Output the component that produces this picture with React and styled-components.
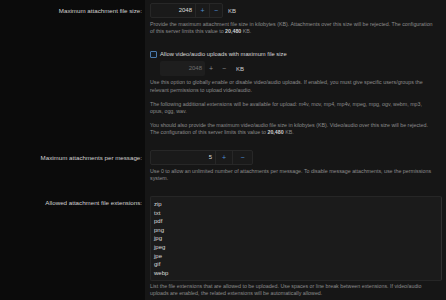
import React from 'react';
import styled, { createGlobalStyle } from 'styled-components';

const Global = createGlobalStyle`
  html, body { margin: 0; padding: 0; background: #0b0b0b; }
  body { font-family: "Liberation Sans", Arial, sans-serif; }
`;

const Form = styled.div`
  width: 446px;
  height: 300px;
  overflow: hidden;
  background: #0b0b0b;
`;

const Row = styled.dl`
  display: grid;
  grid-template-columns: 145px 1fr;
  margin: 0;
`;

const Label = styled.dt`
  margin: 0;
  padding: ${p => p.$top}px 3px 0 0;
  text-align: right;
  color: #d2d2d2;
  font-size: 6.2px;
  line-height: 8px;
`;

const Content = styled.dd`
  margin: 0;
  background: #161616;
  padding: ${p => p.$top}px 4px ${p => p.$bottom}px 5px;
  min-width: 0;
`;

const Inline = styled.div`
  display: flex;
  align-items: center;
  gap: 5px;
  margin: ${p => p.$mt || 0}px 0 0 ${p => p.$ml || 0}px;
`;

const NumberBox = styled.div`
  display: flex;
  height: 15px;
  box-sizing: border-box;
  border: ${p => (p.$disabled ? 'none' : '1px solid #272727')};
  border-radius: 2px;
  background: ${p => (p.$disabled ? 'transparent' : '#1a1a1a')};
`;

const NumValue = styled.div`
  width: ${p => p.$w}px;
  box-sizing: border-box;
  padding-right: 3px;
  text-align: right;
  font-size: 6px;
  line-height: 13px;
  color: ${p => (p.$disabled ? '#6f6f6f' : '#dcdcdc')};
  background: ${p => (p.$disabled ? '#1e1e1e' : 'transparent')};
  border-radius: 2px;
  ${p => (p.$disabled ? 'line-height: 15px;' : '')}
`;

const StepBtn = styled.div`
  width: ${p => p.$w}px;
  display: flex;
  align-items: center;
  justify-content: center;
  font-size: 7px;
  color: ${p => (p.$disabled ? '#8a8a8a' : '#4f8fd4')};
  border-left: ${p => (p.$disabled ? 'none' : '1px solid #272727')};
`;

const Unit = styled.span`
  font-size: 6px;
  color: #cfcfcf;
`;

const Hint = styled.p`
  margin: ${p => p.$mt || 0}px 0 0 0;
  font-size: 5.3px;
  line-height: 7.2px;
  color: #8c8c8c;
  white-space: nowrap;
  b { color: #d0d0d0; font-weight: bold; }
`;

const CheckRow = styled.label`
  display: flex;
  align-items: center;
  gap: 3px;
  margin-top: ${p => p.$mt}px;
  height: 8px;
  font-size: 5.8px;
  color: #dadada;
`;

const Box = styled.span`
  width: 5px;
  height: 5px;
  border: 1px solid #4a7aad;
  border-radius: 1px;
  background: #121a22;
`;

const ExtList = styled.div`
  height: 85px;
  box-sizing: border-box;
  border: 1px solid #262626;
  border-right-color: #303030;
  border-radius: 2px;
  background: #1b1b1b;
  padding: 3.5px 3px;
  font-size: 6px;
  line-height: 8.6px;
  color: #dcdcdc;
  overflow: hidden;
`;

const Ext = styled.div``;

const Stepper = ({ value, w, bw1, bw2, disabled }) => (
  <NumberBox $disabled={disabled}>
    <NumValue $w={w} $disabled={disabled}>{value}</NumValue>
    <StepBtn $w={bw1} $disabled={disabled}>+</StepBtn>
    <StepBtn $w={bw2} $disabled={disabled}>−</StepBtn>
  </NumberBox>
);

const exts = ['zip', 'txt', 'pdf', 'png', 'jpg', 'jpeg', 'jpe', 'gif', 'webp'];

export default function App() {
  return (
    <Form>
      <Global />
      <Row>
        <Label $top={6.5}>Maximum attachment file size:</Label>
        <Content $top={3} $bottom={6}>
          <Inline>
            <Stepper value="2048" w={44} bw1={13} bw2={12} />
            <Unit>KB</Unit>
          </Inline>
          <Hint $mt={2.5}>
            Provide the maximum attachment file size in kilobytes (KB). Attachments over this size will be rejected. The configuration
            <br />
            of this server limits this value to <b>20,480</b> KB.
          </Hint>
          <CheckRow $mt={15.5}>
            <Box />
            Allow video/audio uploads with maximum file size
          </CheckRow>
          <Inline $mt={3} $ml={10}>
            <Stepper value="2048" w={45} bw1={12} bw2={14} disabled />
            <Unit>KB</Unit>
          </Inline>
          <Hint $mt={3}>
            Use this option to globally enable or disable video/audio uploads. If enabled, you must give specific users/groups the
            <br />
            relevant permissions to upload video/audio.
          </Hint>
          <Hint $mt={7}>
            The following additional extensions will be available for upload: m4v, mov, mp4, mp4v, mpeg, mpg, ogv, webm, mp3,
            <br />
            opus, ogg, wav.
          </Hint>
          <Hint $mt={7}>
            You should also provide the maximum video/audio file size in kilobytes (KB). Video/audio over this size will be rejected.
            <br />
            The configuration of this server limits this value to <b>20,480</b> KB.
          </Hint>
        </Content>
      </Row>
      <Row>
        <Label $top={11}>Maximum attachments per message:</Label>
        <Content $top={7.5} $bottom={6}>
          <Inline>
            <Stepper value="5" w={64} bw1={16} bw2={19} />
          </Inline>
          <Hint $mt={3}>
            Use 0 to allow an unlimited number of attachments per message. To disable message attachments, use the permissions
            <br />
            system.
          </Hint>
        </Content>
      </Row>
      <Row>
        <Label $top={10}>Allowed attachment file extensions:</Label>
        <Content $top={7} $bottom={6}>
          <ExtList>
            {exts.map(e => (
              <Ext key={e}>{e}</Ext>
            ))}
          </ExtList>
          <Hint $mt={2}>
            List the file extensions that are allowed to be uploaded. Use spaces or line break between extensions. If video/audio
            <br />
            uploads are enabled, the related extensions will be automatically allowed.
          </Hint>
        </Content>
      </Row>
    </Form>
  );
}
